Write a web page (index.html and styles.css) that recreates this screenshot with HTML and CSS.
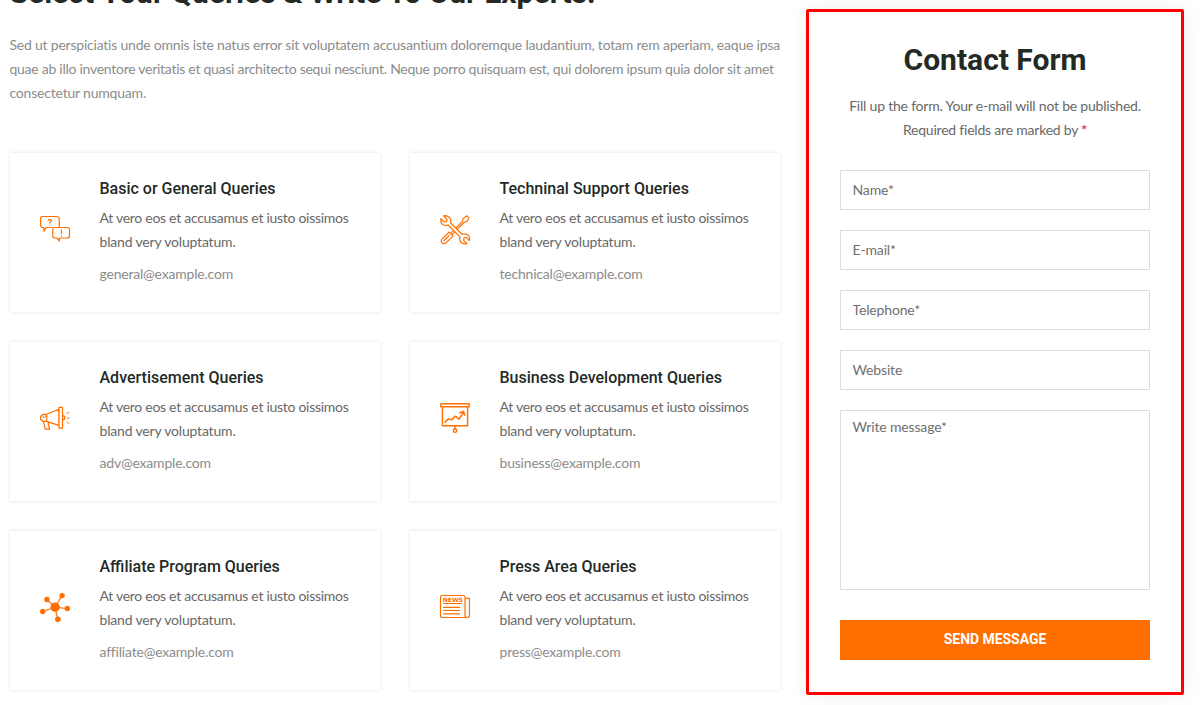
FILE: index.html
```html
<!DOCTYPE html>
<html lang="en">
<head>
<meta charset="utf-8">
<title>Contact</title>
<link rel="stylesheet" href="styles.css">
</head>
<body>
<div class="page">
  <main class="main">
    <h2 class="heading">Select Your Queries &amp; Write To Our Experts!</h2>
    <p class="intro"><span class="i1">Sed ut perspiciatis unde omnis iste natus error sit voluptatem accusantium doloremque laudantium, totam rem aperiam, eaque ipsa</span><br><span class="i2">quae ab illo inventore veritatis et quasi architecto sequi nesciunt. Neque porro quisquam est, qui dolorem ipsum quia dolor sit amet</span><br><span class="i3">consectetur numquam.</span></p>
    <div class="cards">
      <article class="card">
        <svg class="icon" viewBox="0 0 30 30"><path d="M12.5 12.5H6.2L3.9 16.5V12.5H3Q.6 12.5.6 10V3.7Q.6 1.5 3 1.5H16.7Q19.2 1.5 19.2 3.7V12M15 12.5H27.2Q29.5 12.5 29.5 14.5V21Q29.5 23 27.2 23H19.5V26L16.6 23H15Q12.8 23 12.8 21V14.5Q12.8 12.5 15 12.5Z"/><path d="M8.2 5.7Q8.2 4.3 9.8 4.3T11.4 5.7Q11.4 6.7 9.8 7.3V8.5M9.8 9.7V10.7M21.4 14.5V19M21.4 20.2V21.4"/></svg>
        <div class="body"><h3 class="title">Basic or General Queries</h3><p class="text">At vero eos et accusamus et iusto oissimos<br><span class="t2">bland very voluptatum.</span></p><a class="mail">general@example.com</a></div>
      </article>
      <article class="card">
        <svg class="icon" viewBox="0 0 30 30"><path d="M3.5.8 7 4.2 6.5 6.6 4.2 7 .8 3.7Q.3 8 3 9.7 5.5 11 8.2 10L20 21.8Q19 25.2 21.3 27.5 23.5 29.5 27 28.7L23.6 25.4 24 23 26.4 22.4 29.4 25.6Q30.4 21.6 27.6 19.7 25.2 18.3 22 19.2L10.7 8Q11.5 5 9.4 2.5 7 .2 3.5.8Z"/><path d="M16 12.8 22.4 6.3 23.2 3.4 27 .8 29 2.8 26.8 6.6 23.8 7.5 17.4 14M13.2 15.7 10.4 18.5M14.6 17.1 12 19.8M9 17.2 12.9 21.1 11.8 22.4 5.5 28.2Q3.8 29.4 1.9 27.5 .4 25.8 1.8 24.1L8 18.2ZM3.5 26 9.5 20.2"/></svg>
        <div class="body"><h3 class="title">Techninal Support Queries</h3><p class="text">At vero eos et accusamus et iusto oissimos<br><span class="t2">bland very voluptatum.</span></p><a class="mail">technical@example.com</a></div>
      </article>
      <article class="card">
        <svg class="icon" viewBox="0 0 30 30"><path d="M6.7 10.3H3.5Q.5 11.2.5 13.9T3.5 17.4H6.7ZM6.7 10.3 18.8 5.2V21.4L6.7 17.4M19 3.3H22.5V24.2H19ZM22.5 11.7Q24.8 11.7 24.8 13.7T22.5 15.7M3.4 17.7 5.2 25.2H9.6L8 18"/><path d="M3.4 11.6V14M5.1 11.6V14M27 14H30M26.6 9.6 29.3 8M26.6 18 29.3 19.6" stroke-width=".9"/></svg>
        <div class="body"><h3 class="title">Advertisement Queries</h3><p class="text">At vero eos et accusamus et iusto oissimos<br><span class="t2">bland very voluptatum.</span></p><a class="mail">adv@example.com</a></div>
      </article>
      <article class="card">
        <svg class="icon" viewBox="0 0 30 30"><path stroke-width="1.4" d="M.8-.3H29.2V2.8H.8ZM2.4 2.8V21.8H27.6V2.8M15 22V25"/><circle cx="15" cy="26.7" r="1.7" stroke-width="1.4"/><path stroke-width="1.6" d="M4.5 18.8 8 15.3Q9 14.4 10 15.2 11.2 16.4 12.2 15.2L14.5 12.8Q15.5 12 16.5 13L18 14.5Q19 15.3 19.8 14.2L23.5 8.2M19.3 9.1 23.6 7.4 24.7 11.7"/></svg>
        <div class="body"><h3 class="title">Business Development Queries</h3><p class="text">At vero eos et accusamus et iusto oissimos<br><span class="t2">bland very voluptatum.</span></p><a class="mail">business@example.com</a></div>
      </article>
      <article class="card">
        <svg class="icon" viewBox="0 0 30 30"><path d="M15 14.3 7 6.5M15 14.3 22 2.7M15 14.3 27.3 15.5M15 14.3 17.8 26.3M15 14.3 2.6 18.5"/><g fill="#ff6f00" stroke="none"><circle cx="15.1" cy="14.3" r="4.7"/><circle cx="6.9" cy="6.5" r="2.7"/><circle cx="22.1" cy="2.6" r="2.7"/><circle cx="27.3" cy="15.5" r="2.7"/><circle cx="17.9" cy="26.3" r="2.8"/><circle cx="2.7" cy="18.5" r="2.7"/></g></svg>
        <div class="body"><h3 class="title">Affiliate Program Queries</h3><p class="text">At vero eos et accusamus et iusto oissimos<br><span class="t2">bland very voluptatum.</span></p><a class="mail">affiliate@example.com</a></div>
      </article>
      <article class="card">
        <svg class="icon" viewBox="0 0 30 30"><path d="M25 24.5H2.5Q.5 24.5.5 22.5V4.5Q.5 2.5 2.5 2.5H23Q25 2.5 25 4.5V22.5Q25 24.5 27.2 24.5T29.5 22.5V5.4H25"/><path d="M3 10.5H22M3 14.3H20M3 17.5H20M3 20.8H20"/><text x="12.8" y="8.7" class="news">NEWS</text></svg>
        <div class="body"><h3 class="title">Press Area Queries</h3><p class="text">At vero eos et accusamus et iusto oissimos<br><span class="t2">bland very voluptatum.</span></p><a class="mail">press@example.com</a></div>
      </article>
    </div>
  </main>
  <form class="form">
    <h2 class="form-title">Contact Form</h2>
    <p class="note"><span class="n1">Fill up the form. Your e-mail will not be published.</span><br><span class="n2">Required fields are marked by <span class="star">*</span></span></p>
    <input class="field" placeholder="Name*">
    <input class="field" placeholder="E-mail*">
    <input class="field" placeholder="Telephone*">
    <input class="field" placeholder="Website">
    <textarea class="field area" placeholder="Write message*"></textarea>
    <button class="send" type="button">SEND MESSAGE</button>
  </form>
</div>
</body>
</html>
```

FILE: styles.css
```css
* { box-sizing: border-box; margin: 0; }
body { background: #fff; overflow: hidden; font: 14px/24px Lato, sans-serif; color: #686868; }
.page { display: flex; align-items: flex-start; gap: 26.5px; height: 705px; padding-left: 9.5px; }
.main { width: 770px; flex: none; margin-top: -27px; }
.heading { font: 700 30px/40px Roboto, sans-serif; color: #232a26; white-space: nowrap; }
.intro { margin-top: 20px; color: #8c8c8c; white-space: nowrap; }
.i1 { letter-spacing: -.215px; }
.i2 { letter-spacing: -.27px; }
.i3 { letter-spacing: -.2px; }
.cards { display: grid; grid-template-columns: 370px 370px; gap: 30px; margin-top: 48px; }
.card { display: flex; gap: 30px; height: 159px; padding: 24px 0 0 30px; background: #fff; box-shadow: 0 0 4px rgba(0,0,0,.11); }
.icon { flex: none; width: 30px; height: 30px; margin: 38px -.5px 0 .5px; overflow: visible; fill: none; stroke: #ff6f00; stroke-width: 1.2; stroke-linejoin: round; }
.news { font: 700 6px "DejaVu Sans", sans-serif; fill: #ff6f00; stroke: none; text-anchor: middle; }
.title { font: 500 16px/24px Roboto, sans-serif; color: #232a26; }
.text { margin-top: 5px; white-space: nowrap; letter-spacing: -.286px; }
.t2 { letter-spacing: -.18px; }
.mail { display: block; width: max-content; margin-top: 8px; color: #8c8c8c; letter-spacing: -.2px; }
.form { flex: none; width: 378px; height: 686px; margin-top: 9px; padding: 28px 31px 0; border: 3px solid #f00; border-radius: 2px; background: #fff; box-shadow: 0 0 20px rgba(0,0,0,.07); }
.form-title { font: 700 30px/40px Roboto, sans-serif; color: #232a26; text-align: center; }
.note { margin: 14px 0 28px; text-align: center; white-space: nowrap; letter-spacing: -.21px; }
.star { color: #e53030; font-weight: 700; }
.field { display: block; width: 310px; height: 40px; margin-bottom: 20px; padding: 0 12px 2px 11.5px; border: 1px solid #ddd; border-radius: 0; background: #fff; font: 14px/24px Lato, sans-serif; letter-spacing: -.15px; outline: none; }
.field::placeholder { color: #6f6f6f; opacity: 1; }
.area { height: 180px; margin-bottom: 30px; padding-top: 4px; resize: none; }
.send { display: block; width: 310px; height: 40px; padding: 0 0 2px; border: 0; background: #ff6f00; color: #fff; font: 700 14px/38px Roboto, sans-serif; letter-spacing: -.05px; }
```
